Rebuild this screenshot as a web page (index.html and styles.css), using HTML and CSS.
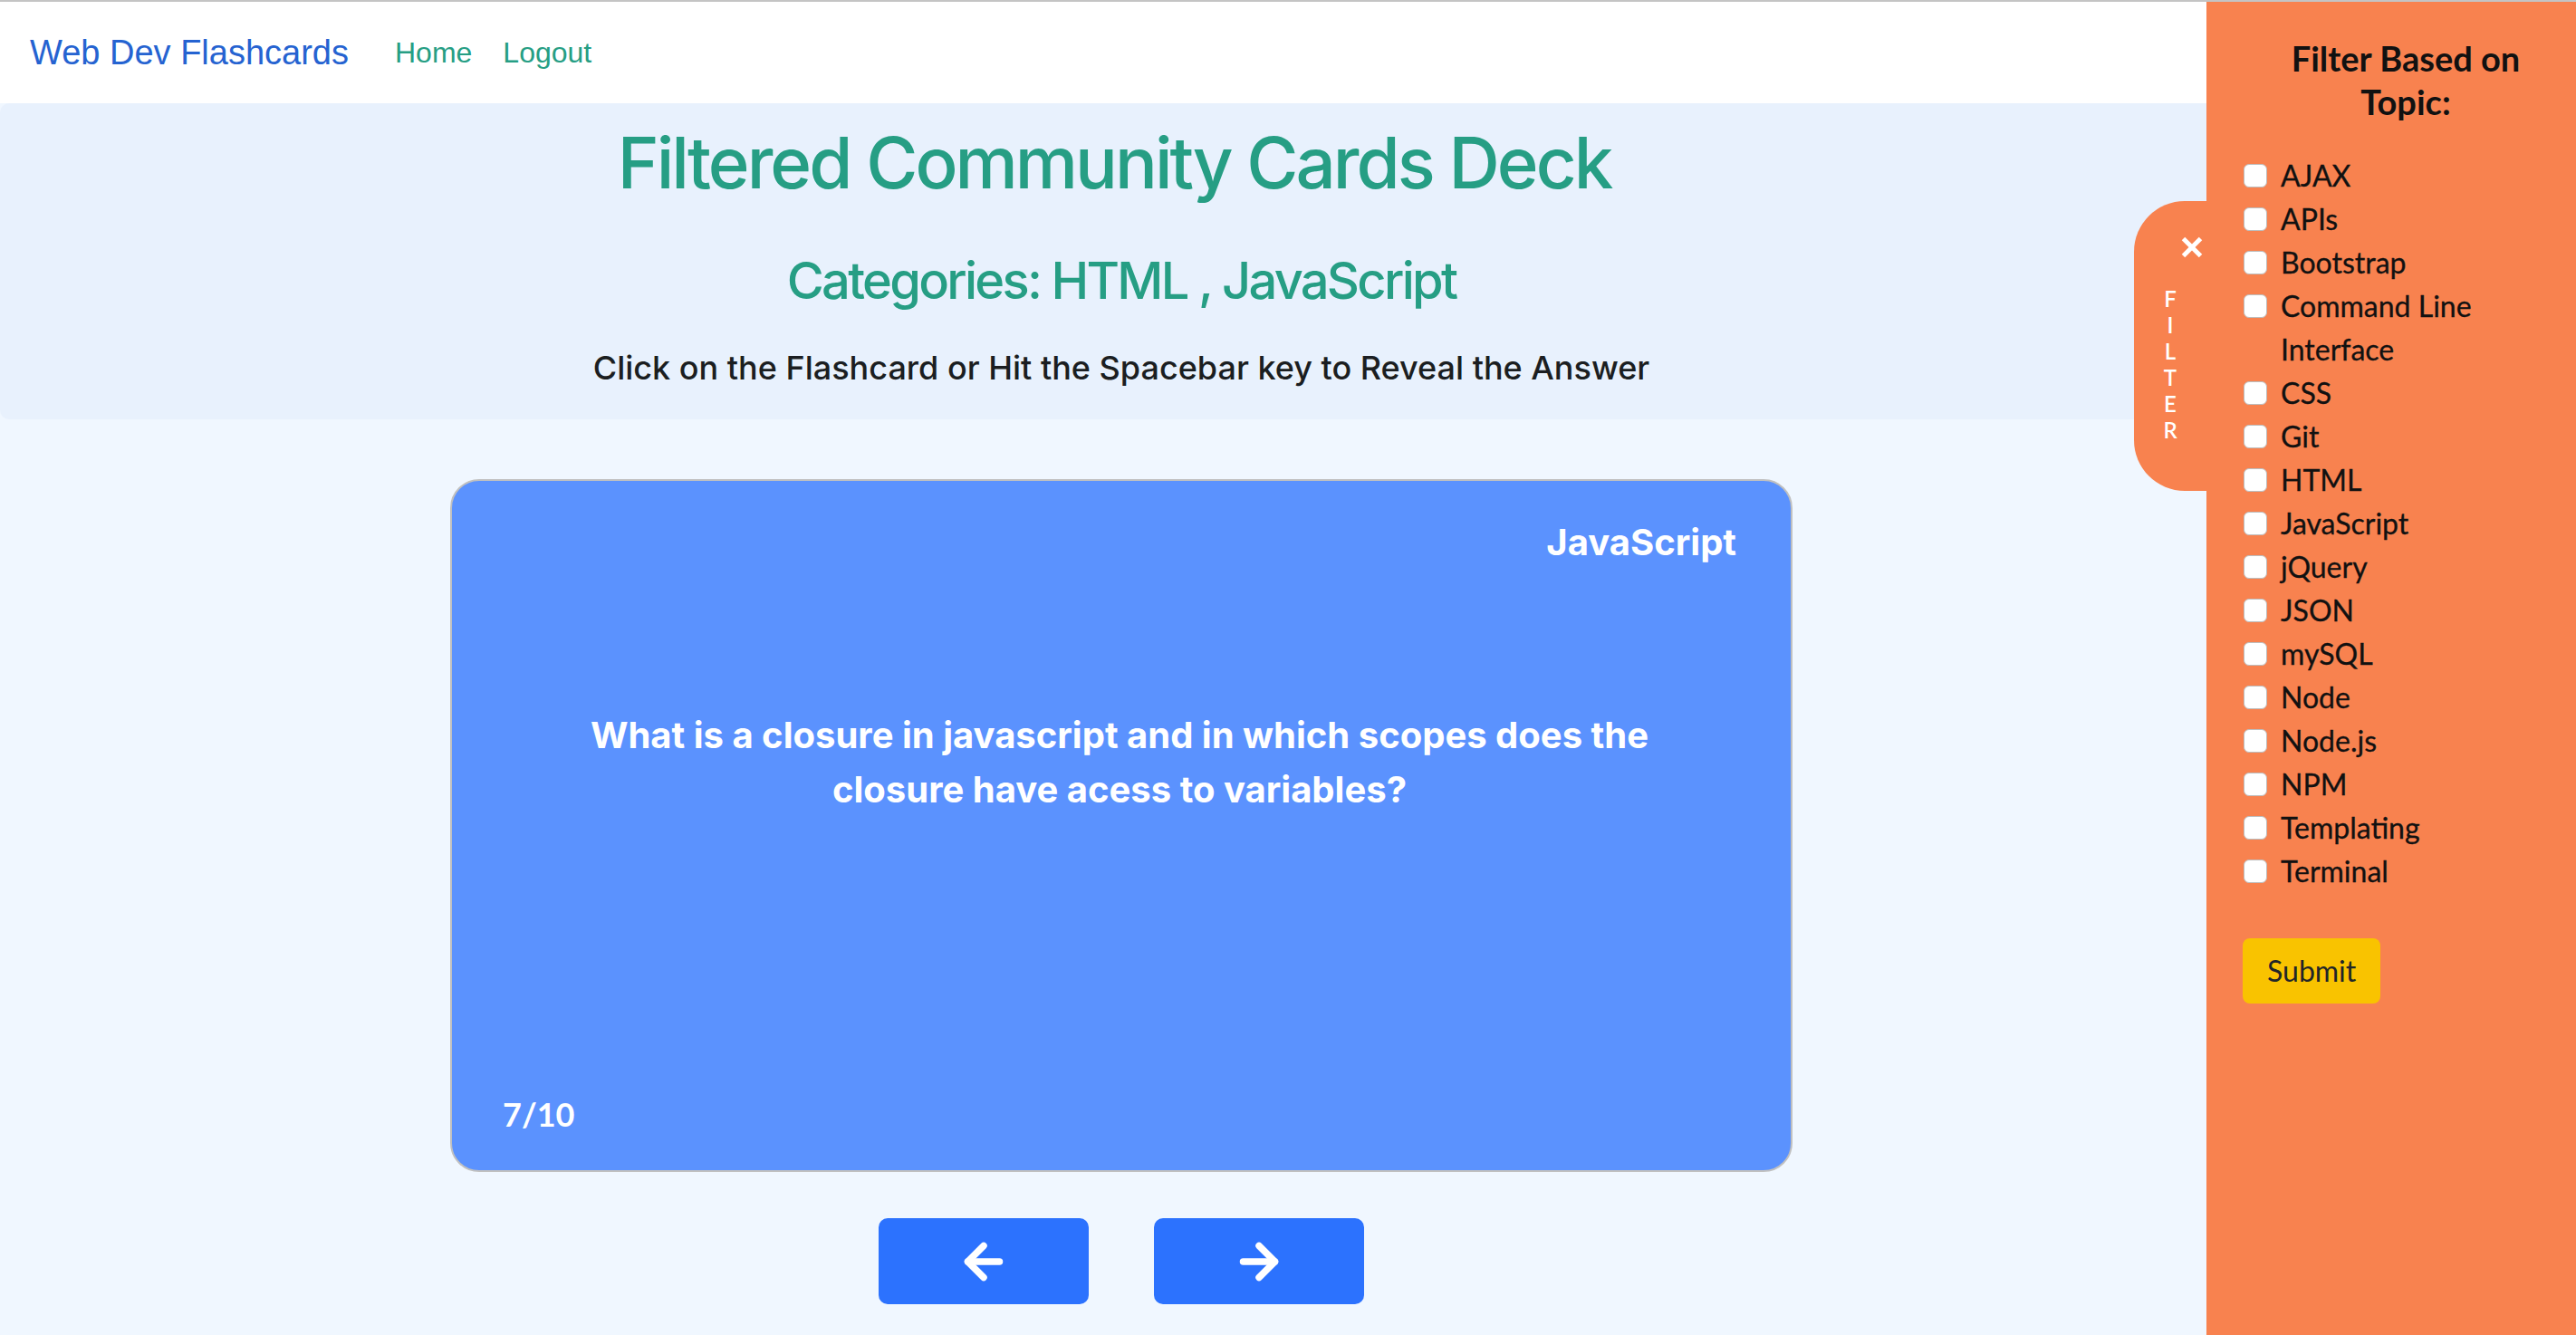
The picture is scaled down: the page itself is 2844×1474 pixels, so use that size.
FILE: index.html
```html
<!DOCTYPE html>
<html lang="en">
<head>
<meta charset="utf-8">
<title>Web Dev Flashcards</title>
<link rel="stylesheet" href="styles.css">
</head>
<body>
<div class="page">
  <main class="main">
    <nav class="navbar">
      <a class="brand" href="#">Web Dev Flashcards</a>
      <a class="nav-link" href="#">Home</a>
      <a class="nav-link" href="#">Logout</a>
    </nav>
    <header class="banner">
      <h1 class="title">Filtered Community Cards Deck</h1>
      <h3 class="subtitle">Categories: HTML , JavaScript</h3>
      <p class="hint">Click on the Flashcard or Hit the Spacebar key to Reveal the Answer</p>
    </header>
    <section class="deck">
      <div class="card">
        <div class="card-topic">JavaScript</div>
        <p class="card-question">What is a closure in javascript and in which scopes does the closure have acess to variables?</p>
        <div class="card-count">7/10</div>
      </div>
      <div class="controls">
        <button class="arrow-btn" type="button" aria-label="Previous">
          <svg width="60" height="60" viewBox="0 0 24 24" fill="none" stroke="#fff" stroke-width="3" stroke-linecap="round" stroke-linejoin="round"><line x1="19" y1="12" x2="5" y2="12"/><polyline points="12 19 5 12 12 5"/></svg>
        </button>
        <button class="arrow-btn" type="button" aria-label="Next">
          <svg width="60" height="60" viewBox="0 0 24 24" fill="none" stroke="#fff" stroke-width="3" stroke-linecap="round" stroke-linejoin="round"><line x1="5" y1="12" x2="19" y2="12"/><polyline points="12 5 19 12 12 19"/></svg>
        </button>
      </div>
    </section>
  </main>
  <aside class="sidebar">
    <div class="tab">
      <svg class="tab-close" width="24" height="24" viewBox="0 0 24 24" fill="none" stroke="#fff" stroke-width="5"><line x1="2.5" y1="2.5" x2="21.5" y2="21.5"/><line x1="21.5" y1="2.5" x2="2.5" y2="21.5"/></svg>
      <span class="tab-label">FILTER</span>
    </div>
    <h5 class="filter-title">Filter Based on Topic:</h5>
    <form class="filter-form">
      <label class="check"><input type="checkbox"><span>AJAX</span></label>
      <label class="check"><input type="checkbox"><span>APIs</span></label>
      <label class="check"><input type="checkbox"><span>Bootstrap</span></label>
      <label class="check"><input type="checkbox"><span>Command Line Interface</span></label>
      <label class="check"><input type="checkbox"><span>CSS</span></label>
      <label class="check"><input type="checkbox"><span>Git</span></label>
      <label class="check"><input type="checkbox"><span>HTML</span></label>
      <label class="check"><input type="checkbox"><span>JavaScript</span></label>
      <label class="check"><input type="checkbox"><span>jQuery</span></label>
      <label class="check"><input type="checkbox"><span>JSON</span></label>
      <label class="check"><input type="checkbox"><span>mySQL</span></label>
      <label class="check"><input type="checkbox"><span>Node</span></label>
      <label class="check"><input type="checkbox"><span>Node.js</span></label>
      <label class="check"><input type="checkbox"><span>NPM</span></label>
      <label class="check"><input type="checkbox"><span>Templating</span></label>
      <label class="check"><input type="checkbox"><span>Terminal</span></label>
      <button class="submit" type="button">Submit</button>
    </form>
  </aside>
</div>
</body>
</html>
```

FILE: styles.css
```css
* { box-sizing: border-box; }
html, body { margin: 0; padding: 0; }
body {
  background: #f0f7ff;
  border-top: 2px solid #c4c4c4;
  font-family: "Liberation Sans", Arial, sans-serif;
  color: #212529;
}
.page {
  display: flex;
  min-height: calc(100vh - 2px);
}
.main {
  flex: 1;
  min-width: 0;
  padding-bottom: 20px;
}

/* nav */
.navbar {
  height: 112px;
  background: #fff;
  display: flex;
  align-items: center;
  padding-left: 33px;
}
.brand {
  font-size: 38px;
  line-height: 46px;
  color: #2563d1;
  text-decoration: none;
  margin-right: 51px;
}
.nav-link {
  font-size: 32px;
  line-height: 46px;
  color: #269e84;
  text-decoration: none;
}
.nav-link + .nav-link { margin-left: 34px; }

/* banner */
.banner {
  background: #e8f1fd;
  border-radius: 10px 0 0 10px;
  padding: 19px 0 30px 40px;
  text-align: center;
  font-family: Inter, "Liberation Sans", sans-serif;
}
.title {
  margin: 0;
  padding-right: 16px;
  font-size: 78px;
  line-height: 94px;
  font-weight: 500;
  letter-spacing: -3px;
  color: #269e84;
}
.subtitle {
  margin: 50px 0 0;
  font-size: 56px;
  line-height: 67px;
  font-weight: 500;
  letter-spacing: -2.7px;
  color: #269e84;
}
.hint {
  margin: 35px 0 0;
  font-size: 36px;
  line-height: 54px;
  font-weight: 500;
  color: #1b1e21;
}

/* card */
.deck {
  padding-left: 40px;
}
.card {
  width: 1482px;
  height: 765px;
  margin: 66px auto 0;
  background: #5b92fe;
  border: 2px solid #c0c0c0;
  border-radius: 32px;
  display: flex;
  flex-direction: column;
  padding: 44px 60px 35px 56px;
  color: #fff;
  font-family: Inter, "Liberation Sans", sans-serif;
}
.card-topic {
  align-self: flex-end;
  font-size: 40px;
  line-height: 48px;
  font-weight: 700;
}
.card-question {
  margin: 159px 0 0;
  padding: 0 60px;
  font-size: 40px;
  line-height: 60px;
  font-weight: 700;
  text-align: center;
}
.card-count {
  margin-top: auto;
  font-family: Lato, "Open Sans", sans-serif;
  font-size: 36px;
  line-height: 54px;
  font-weight: 700;
}
.controls {
  display: flex;
  justify-content: center;
  gap: 72px;
  margin-top: 51px;
}
.arrow-btn {
  width: 232px;
  height: 95px;
  background: #2c72fe;
  border: 0;
  border-radius: 10px;
  display: flex;
  align-items: center;
  justify-content: center;
  padding: 0;
}

/* sidebar */
.sidebar {
  width: 408px;
  flex: none;
  position: relative;
  background: #f8824f;
  padding: 38px 8px 0 40px;
  font-family: Lato, "Open Sans", sans-serif;
  color: #111;
}
.tab {
  position: absolute;
  left: -80px;
  top: 220px;
  width: 80px;
  height: 320px;
  background: #f8824f;
  border-radius: 56px 0 0 56px;
  display: flex;
  flex-direction: column;
  align-items: flex-start;
  padding-top: 39px;
}
.tab-close {
  margin-left: 52px;
  display: block;
}
.tab-label {
  margin-top: 30px;
  align-self: center;
  width: min-content;
  word-break: break-all;
  text-align: center;
  color: #fff;
  font-size: 24px;
  line-height: 29px;
  font-weight: 600;
}
.filter-title {
  max-width: 300px;
  margin: 0 auto 34px;
  text-align: center;
  font-size: 38px;
  line-height: 48px;
  font-weight: 700;
}
.filter-form {
  display: flex;
  flex-direction: column;
  align-items: flex-start;
}
.check {
  display: flex;
  align-items: flex-start;
  font-size: 32px;
  line-height: 48px;
  -webkit-text-stroke: 0.3px #111;
}
.check input {
  appearance: none;
  -webkit-appearance: none;
  flex: none;
  width: 26px;
  height: 26px;
  margin: 11px 15px 0 1px;
  background: #fff;
  border: 1px solid #bdbdbd;
  border-radius: 6px;
}
.submit {
  margin-top: 50px;
  padding: 12px 27px;
  font-family: Lato, "Open Sans", sans-serif;
  font-size: 32px;
  line-height: 48px;
  background: #f9c300;
  color: #212529;
  border: 0;
  border-radius: 8px;
}
```
